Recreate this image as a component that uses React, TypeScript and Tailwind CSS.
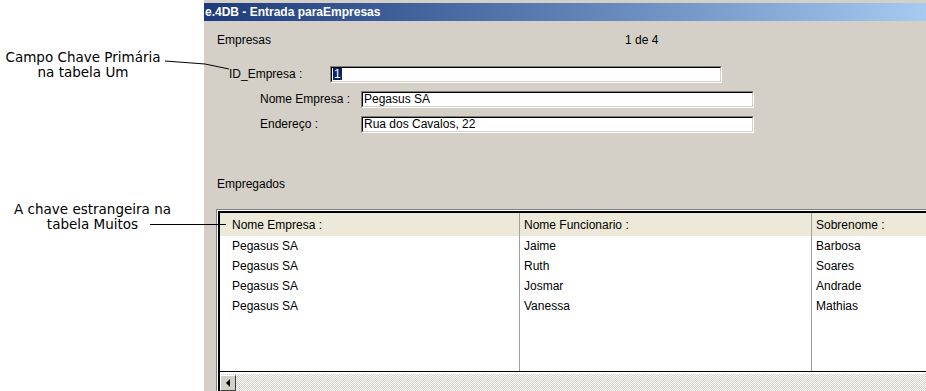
import React from 'react';

const rows = [
  { empresa: 'Pegasus SA', nome: 'Jaime', sobrenome: 'Barbosa' },
  { empresa: 'Pegasus SA', nome: 'Ruth', sobrenome: 'Soares' },
  { empresa: 'Pegasus SA', nome: 'Josmar', sobrenome: 'Andrade' },
  { empresa: 'Pegasus SA', nome: 'Vanessa', sobrenome: 'Mathias' },
];

const Field: React.FC<{ width: string; children?: React.ReactNode }> = ({ width, children }) => (
  <div className={`${width} h-[17px] border-t border-l border-[#808080] border-b border-r border-b-white border-r-white`}>
    <div className="h-full border-t border-l border-black border-b border-r border-b-[#d4d0c8] border-r-[#d4d0c8] bg-white flex items-center pl-px leading-none">
      {children}
    </div>
  </div>
);

const Column: React.FC<{ title: string; values: string[]; className: string; pad: string }> = ({
  title,
  values,
  className,
  pad,
}) => (
  <div className={`flex flex-col ${className}`}>
    <div className={`h-[23px] shrink-0 bg-[#ece9d8] flex items-center ${pad}`}>{title}</div>
    <div className={`flex-1 bg-white ${pad}`}>
      {values.map((v, i) => (
        <div key={i} className="h-5 flex items-center">
          {v}
        </div>
      ))}
    </div>
  </div>
);

export default function App() {
  return (
    <div className="relative flex w-[926px] h-[391px] overflow-hidden bg-white font-['Liberation_Sans',Arial,sans-serif] text-[12px] text-black">
      {/* annotations */}
      <aside className="w-[204px] shrink-0 font-['DejaVu_Sans',Verdana,sans-serif] text-[13.5px] leading-[15px] pt-[50px]">
        <div className="w-[166px] text-center">
          Campo Chave Primária
          <br />
          na tabela Um
        </div>
        <div className="w-[185px] text-center mt-[122px]">
          A chave estrangeira na
          <br />
          tabela Muitos
        </div>
      </aside>

      {/* window */}
      <main className="flex-1 flex flex-col bg-[#d4d0c8] border-t-[3px] border-[#d4d0c8]">
        <div className="h-[18px] shrink-0 bg-gradient-to-r from-[#1e3a7b] to-[#a6caf0] text-white font-bold flex items-center pl-px">
          e.4DB - Entrada paraEmpresas
        </div>

        <div className="mt-[12px] h-[14px] flex items-center pl-[13px]">
          <span className="w-[408px]">Empresas</span>
          <span>1 de 4</span>
        </div>

        <div className="mt-[18px] flex items-center pl-[25px]">
          <span className="w-[101px]">ID_Empresa :</span>
          <Field width="w-[392px]">
            <span className="bg-[#0a246a] text-white px-px">1</span>
          </Field>
        </div>

        <div className="mt-[7px] flex items-center pl-[56px]">
          <span className="w-[101px]">Nome Empresa :</span>
          <Field width="w-[393px]">Pegasus SA</Field>
        </div>

        <div className="mt-[7px] flex items-center pl-[56px]">
          <span className="w-[101px]">Endereço :</span>
          <Field width="w-[393px]">Rua dos Cavalos, 22</Field>
        </div>

        <div className="mt-[44px] h-[14px] flex items-center pl-[13px]">Empregados</div>

        <div className="mt-[18px] ml-[12px] flex-1 flex flex-col border-t border-l border-[#808080]">
          <div className="flex-1 flex flex-col border-t border-l border-white">
            <div className="flex-1 flex flex-col border-t-2 border-l-2 border-black">
              <div className="flex-1 flex border-b border-black">
                <Column
                  title="Nome Empresa :"
                  values={rows.map((r) => r.empresa)}
                  className="w-[300px] border-r border-[#a0a0a0]"
                  pad="pl-[12px]"
                />
                <Column
                  title="Nome Funcionario :"
                  values={rows.map((r) => r.nome)}
                  className="w-[292px] border-r border-[#a0a0a0]"
                  pad="pl-[4px]"
                />
                <Column
                  title="Sobrenome :"
                  values={rows.map((r) => r.sobrenome)}
                  className="flex-1"
                  pad="pl-[4px]"
                />
              </div>
              <div className="h-[2px] shrink-0 bg-white" />
              <div className="h-[17px] shrink-0 flex bg-[image:repeating-conic-gradient(#d4d0c8_0_25%,#ffffff_0_50%)] bg-[length:2px_2px]">
                <div className="w-[16px] h-[16px] mt-px bg-[#d4d0c8] border-t border-l border-white border-b border-r border-b-[#404040] border-r-[#404040] flex items-center justify-center">
                  <div className="w-0 h-0 border-y-[4px] border-y-transparent border-r-[4px] border-r-black" />
                </div>
              </div>
            </div>
          </div>
        </div>
      </main>

      {/* leader lines */}
      <svg className="absolute inset-0 pointer-events-none" width="926" height="391">
        <polyline points="165,61 205,64 229,69" fill="none" stroke="#000" strokeWidth="1" />
        <line x1="150" y1="224.5" x2="226" y2="224.5" stroke="#000" strokeWidth="1" />
      </svg>
    </div>
  );
}
